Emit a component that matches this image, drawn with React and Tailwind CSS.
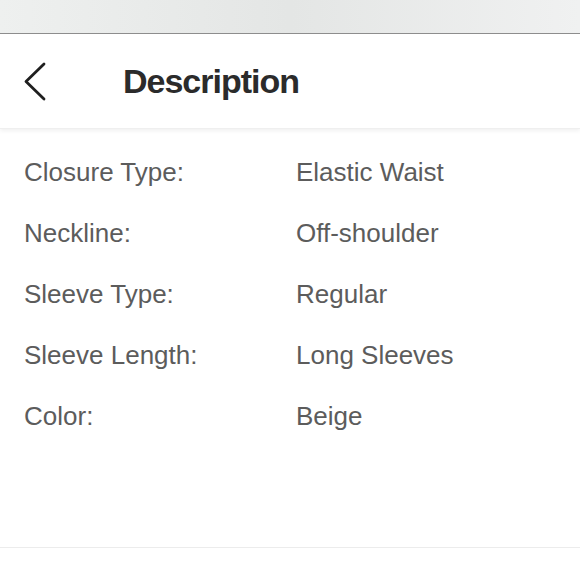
import React from 'react';

const SPECS = [
    { label: 'Closure Type:', value: 'Elastic Waist' },
    { label: 'Neckline:', value: 'Off-shoulder' },
    { label: 'Sleeve Type:', value: 'Regular' },
    { label: 'Sleeve Length:', value: 'Long Sleeves' },
    { label: 'Color:', value: 'Beige' },
];

const App = () => {
    return (
        <div className="w-[580px] h-[580px] bg-white overflow-hidden" style={{ fontFamily: '"Liberation Sans", Arial, sans-serif' }}>
            {/* status strip */}
            <div className="h-[34px] bg-gradient-to-r from-[#eef0ef] via-[#e4e6e5] to-[#f0f1f1] border-b border-[#8e8e8e]" />

            {/* header */}
            <div className="relative h-[95px] flex items-center pl-[23px] bg-white shadow-[0_2px_4px_rgba(0,0,0,0.06)] border-b border-[#efefef]">
                <svg width="24" height="40" viewBox="0 0 24 40" fill="none" stroke="#1f1f1f" strokeWidth="2.8" strokeLinecap="round" strokeLinejoin="round">
                    <polyline points="21,3 3,20.5 21,38" />
                </svg>
                <h1 className="ml-[76px] text-[34px] font-bold tracking-[-1px] text-[#2b2b2b] leading-none">Description</h1>
            </div>

            {/* specs */}
            <div className="pt-[13px] h-[419px] border-b border-[#ececec]">
                {SPECS.map((row) => (
                    <div key={row.label} className="flex items-center h-[61px] pl-[24px] text-[26px] text-[#5c5c5c]">
                        <span className="w-[272px]">{row.label}</span>
                        <span>{row.value}</span>
                    </div>
                ))}
            </div>
        </div>
    );
};

export default App;
